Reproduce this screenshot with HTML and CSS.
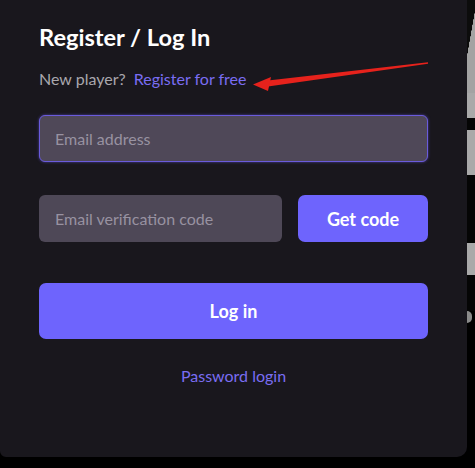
FILE: index.html
```html
<!DOCTYPE html>
<html lang="en">
  <head>
    <meta charset="UTF-8" />
    <meta name="viewport" content="width=device-width, initial-scale=1.0" />
    <title>Register / Log In</title>
    <link rel="stylesheet" href="styles.css">
  </head>
  <body>
    <div class="screen">
      <div id="loginPanel" class="panel">
        <h1 class="title">Register / Log In</h1>
        <p class="subtitle">
          New player? <a href="#" class="link">Register for free</a>
        </p>

        <input class="field field-active" type="email" placeholder="Email address" />

        <div class="code-row">
          <input class="field field-code" type="text" placeholder="Email verification code" />
          <button class="btn btn-code">Get code</button>
        </div>

        <button class="btn btn-login">Log in</button>

        <a href="#" class="link alt-login">Password login</a>

        <!-- annotation arrow drawn over the screenshot -->
        <svg class="arrow" width="475" height="120" viewBox="0 0 475 120">
          <polygon points="428,62.3 428,63.7 268,86.5 268,80.5" fill="#e6221c" />
          <polygon points="253,84.5 271,77 268,91" fill="#e6221c" />
        </svg>
      </div>

      <div class="backdrop">
        <div class="bd bd-wedge"></div>
        <div class="bd bd-light" style="height: 25px"></div>
        <div class="bd bd-dark" style="height: 12px"></div>
        <div class="bd bd-light" style="height: 45px"></div>
        <div class="bd bd-dark" style="height: 68px"></div>
        <div class="bd bd-light" style="height: 32px"></div>
        <div class="bd bd-dark" style="height: 36px"></div>
        <div class="bd bd-blob" style="height: 12px"></div>
      </div>
    </div>
  </body>
</html>
```

FILE: styles.css
```css
body {
  margin: 0;
  overflow: hidden;
  background: #000;
  font-family: Lato, "Noto Sans", sans-serif;
}
.screen {
  display: flex;
  align-items: flex-start;
  width: 475px;
  height: 468px;
}
.panel {
  position: relative;
  width: 467px;
  height: 457px;
  box-sizing: border-box;
  padding: 23px 39px 0 39px;
  background: #19171d;
  border-radius: 0 0 10px 6px;
  display: flex;
  flex-direction: column;
}
.title {
  margin: 0;
  color: #fff;
  font-size: 23.6px;
  font-weight: 700;
  line-height: 28px;
}
.subtitle {
  margin: 18px 0 0 0;
  color: #a9a7ad;
  font-size: 16px;
  line-height: 20px;
}
.link {
  color: #7a6df2;
  text-decoration: none;
  margin-left: 4px;
}
.field {
  box-sizing: border-box;
  height: 47px;
  border: none;
  border-radius: 6px;
  background: #4e4857;
  padding: 0 16px;
  color: #fff;
  font-family: Lato, "Noto Sans", sans-serif;
  font-size: 16px;
  outline: none;
}
.field::placeholder {
  color: #9892a1;
}
.field-active {
  margin-top: 26px;
  width: 389px;
  border: 1.5px solid #6a5bdc;
  box-shadow: 0 0 3px rgba(110, 90, 240, 0.6);
  background: #4f4858;
  padding-left: 15px;
}
.code-row {
  display: flex;
  gap: 16px;
  margin-top: 33px;
}
.field-code {
  width: 243px;
}
.btn {
  border: none;
  border-radius: 7px;
  background: #6e64fd;
  color: #fff;
  font-family: Lato, "Noto Sans", sans-serif;
  font-weight: 700;
  font-size: 18px;
  cursor: pointer;
}
.btn-code {
  width: 130px;
  height: 47px;
}
.btn-login {
  margin-top: 41px;
  width: 389px;
  height: 56px;
}
.alt-login {
  margin: 27px 0 0 0;
  align-self: center;
  font-size: 16px;
  line-height: 20px;
}
.arrow {
  position: absolute;
  top: 0;
  left: 0;
  pointer-events: none;
}
.backdrop {
  width: 8px;
  display: flex;
  flex-direction: column;
}
.bd-wedge {
  height: 93px;
  background: linear-gradient(100deg, #0c0c0c 0%, #0c0c0c 40%, #a3a3a3 41%, #a3a3a3 100%);
}
.bd-light {
  background: #a9a9a9;
}
.bd-dark {
  background: #050505;
}
.bd-blob {
  background: #8a8a8a;
  border-radius: 0 6px 6px 0;
  width: 5px;
}
```
